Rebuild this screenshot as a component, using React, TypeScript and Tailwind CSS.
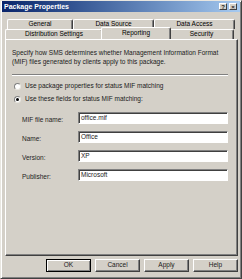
import React from 'react';

const FONT = { fontFamily: '"Liberation Sans", Arial, sans-serif' };

function Tab({ label, w, selected = false }: { label: string; w: string; selected?: boolean }) {
  return (
    <div
      className={`${w} ${selected ? 'h-[12px] -mx-[2px] z-10 bg-[#d4d0c8]' : 'h-[10px]'} flex items-center justify-center border-t border-l border-r border-t-white border-l-white border-r-[#404040] shadow-[inset_-1px_0_0_#808080] rounded-t-[2px] text-[6.5px] leading-none text-black`}
    >
      <span className={selected ? '-mt-[1px]' : ''}>{label}</span>
    </div>
  );
}

function Radio({ checked, label }: { checked: boolean; label: string }) {
  return (
    <div className="flex items-center h-[9px] gap-[4px]">
      <div className="w-[7px] h-[7px] rounded-full bg-white border border-t-[#808080] border-l-[#808080] border-b-[#e8e6e0] border-r-[#e8e6e0] flex items-center justify-center">
        {checked && <div className="w-[3px] h-[3px] rounded-full bg-black" />}
      </div>
      <span className="text-[6.5px] leading-none">{label}</span>
    </div>
  );
}

function Field({ label, value }: { label: string; value: string }) {
  return (
    <div className="flex items-center h-[12px]">
      <span className="w-[56px] text-[6.5px] leading-none mt-[4px] text-[#222]">{label}</span>
      <div className="w-[150px] h-[12px] bg-white border border-t-[#808080] border-l-[#808080] border-b-white border-r-white shadow-[inset_1px_1px_0_#404040] flex items-center px-[2px] text-[6.5px] leading-none">
        {value}
      </div>
    </div>
  );
}

function Button({ label, primary = false }: { label: string; primary?: boolean }) {
  return (
    <div
      className={`w-[45px] h-[13px] flex items-center justify-center text-[6.5px] leading-none bg-[#d4d0c8] border ${
        primary
          ? 'border-black shadow-[inset_1px_1px_0_#fff,inset_-1px_-1px_0_#808080]'
          : 'border-t-white border-l-white border-b-[#404040] border-r-[#404040] shadow-[inset_-1px_-1px_0_#808080]'
      }`}
    >
      {label}
    </div>
  );
}

export default function App() {
  return (
    <div
      style={FONT}
      className="w-[242px] h-[279px] bg-[#d4d0c8] border border-t-[#e8e6e0] border-l-[#e8e6e0] border-b-[#404040] border-r-[#404040] shadow-[inset_1px_1px_0_#fff,inset_-1px_-1px_0_#808080] flex flex-col text-[#1a1a1a] overflow-hidden"
    >
      {/* title bar */}
      <div className="mx-[1px] h-[11px] bg-gradient-to-r from-[#0a246a] to-[#a6caf0] flex items-center justify-between pl-[2px] pr-[3px]">
        <span className="text-white font-bold text-[7px] leading-none">Package Properties</span>
        <div className="flex gap-[2px]">
          <div className="w-[8px] h-[7px] bg-[#d4d0c8] border border-t-white border-l-white border-b-[#404040] border-r-[#404040] flex items-center justify-center text-[6px] font-bold leading-none">?</div>
          <div className="w-[8px] h-[7px] bg-[#d4d0c8] border border-t-white border-l-white border-b-[#404040] border-r-[#404040] flex items-center justify-center text-[6px] font-bold leading-none">×</div>
        </div>
      </div>

      {/* tabs */}
      <div className="mt-[7px] flex pl-[6px]">
        <Tab label="General" w="w-[66px]" />
        <Tab label="Data Source" w="w-[81px]" />
        <Tab label="Data Access" w="w-[81px]" />
      </div>
      <div className="flex pl-[4px] items-end -mt-[2px] h-[12px]">
        <Tab label="Distribution Settings" w="w-[98px]" />
        <Tab label="Reporting" w="w-[70px]" selected />
        <Tab label="Security" w="w-[65px]" />
      </div>

      {/* panel */}
      <div className="ml-[4px] w-[233px] h-[217px] border border-t-white border-l-white border-b-[#404040] border-r-[#404040] shadow-[inset_-1px_-1px_0_#808080] px-[6px] pt-[8px]">
        <p className="text-[6.5px] leading-[9px] pr-[4px]">
          Specify how SMS determines whether Management Information Format (MIF) files generated by clients apply to this package.
        </p>
        <div className="mt-[8px] w-[216px] h-[2px] border-t border-b border-t-[#808080] border-b-white" />
        <div className="mt-[6px] flex flex-col gap-[4px] pl-[2px]">
          <Radio checked={false} label="Use package properties for status MIF matching" />
          <Radio checked label="Use these fields for status MIF matching:" />
        </div>
        <div className="mt-[8px] pl-[10px] flex flex-col gap-[7px]">
          <Field label="MIF file name:" value="office.mif" />
          <Field label="Name:" value="Office" />
          <Field label="Version:" value="XP" />
          <Field label="Publisher:" value="Microsoft" />
        </div>
      </div>

      {/* buttons */}
      <div className="mt-[3px] flex justify-end gap-[4px] pr-[3px]">
        <Button label="OK" primary />
        <Button label="Cancel" />
        <Button label="Apply" />
        <Button label="Help" />
      </div>
    </div>
  );
}
